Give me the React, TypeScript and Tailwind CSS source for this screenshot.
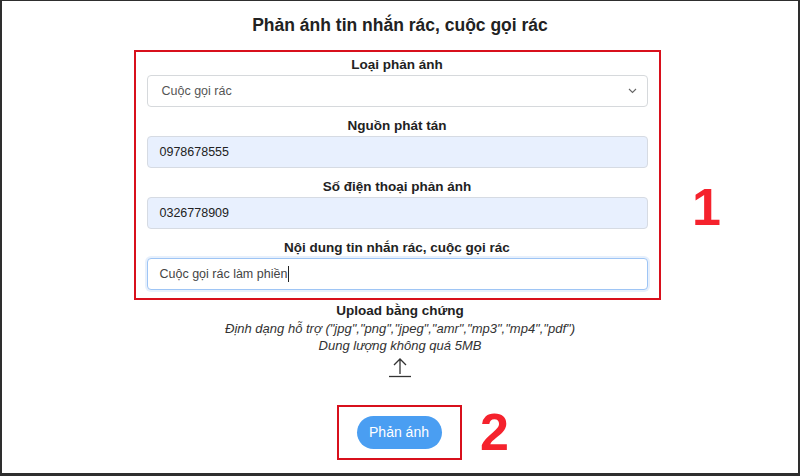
import React from "react";

const fields = [
  { label: "Nguồn phát tán", value: "0978678555" },
  { label: "Số điện thoại phản ánh", value: "0326778909" },
];

export default function App() {
  return (
    <div className="relative h-[476px] w-[800px] overflow-hidden border-t border-l-2 border-r-2 border-b-[3px] border-[#2e2e2e] bg-white font-['Liberation_Sans',Arial,sans-serif] text-[#222]">
      <div className="flex flex-col items-center">
        <h1 className="mt-[13px] text-[17.5px] font-bold leading-[22px] text-[#222]">
          Phản ánh tin nhắn rác, cuộc gọi rác
        </h1>

        {/* Annotated form block */}
        <div className="mt-[14px] ml-[-6px] flex w-[527px] flex-col border-2 border-[#d8101c] px-[11px] pb-[8px] pt-[4px]">
          <label className="mb-[1px] text-center text-[13.5px] font-bold leading-[18px]">
            Loại phản ánh
          </label>
          <div className="flex h-[32px] items-center justify-between rounded-[4px] border border-[#d6d9dc] bg-white pl-[14px] pr-[10px] text-[12.5px] text-[#555]">
            <span>Cuộc gọi rác</span>
            <svg width="9" height="6" viewBox="0 0 9 6" fill="none">
              <path d="M1 1l3.5 3.5L8 1" stroke="#666" strokeWidth="1.1" />
            </svg>
          </div>

          {fields.map((f) => (
            <React.Fragment key={f.label}>
              <label className="mb-[1px] mt-[10px] text-center text-[13.5px] font-bold leading-[18px]">
                {f.label}
              </label>
              <div className="flex h-[32px] items-center rounded-[4px] border border-[#d6dbe3] bg-[#e8f0fe] pl-[12px] text-[12.5px] text-[#222]">
                {f.value}
              </div>
            </React.Fragment>
          ))}

          <label className="mb-[1px] mt-[10px] text-center text-[13.5px] font-bold leading-[18px]">
            Nội dung tin nhắn rác, cuộc gọi rác
          </label>
          <div className="flex h-[32px] items-center rounded-[4px] border border-[#9ec5f5] bg-white pl-[12px] text-[12.5px] text-[#444] shadow-[0_0_0_2px_rgba(120,170,240,0.18)]">
            Cuộc gọi rác làm phiền
            <span className="ml-[1px] h-[16px] w-px bg-[#222]" />
          </div>
        </div>

        {/* Upload */}
        <div className="mt-[2px] flex flex-col items-center">
          <div className="text-[13.5px] font-bold leading-[18px]">Upload bằng chứng</div>
          <div className="text-[13px] italic leading-[17px] text-[#333]">
            Định dạng hỗ trợ ("jpg","png","jpeg","amr","mp3","mp4","pdf")
          </div>
          <div className="text-[13px] italic leading-[17px] text-[#333]">
            Dung lượng không quá 5MB
          </div>
          <svg className="mt-[2px]" width="24" height="22" viewBox="0 0 24 22" fill="none">
            <path d="M12 3v15M6 9l6-6 6 6" stroke="#333" strokeWidth="1.3" />
            <path d="M1 20.5h22" stroke="#333" strokeWidth="1.3" />
          </svg>
        </div>

        {/* Submit */}
        <div className="mt-[27px] ml-[-2px] flex h-[55px] w-[125px] items-center justify-center border-2 border-[#d8101c]">
          <button className="h-[33px] w-[85px] rounded-full bg-[#4a9ef2] text-[14px] text-white">
            Phản ánh
          </button>
        </div>
      </div>

      <span className="absolute left-[690px] top-[180px] text-[52px] font-bold leading-none text-[#f5222d]">
        1
      </span>
      <span className="absolute left-[478px] top-[405px] text-[52px] font-bold leading-none text-[#f5222d]">
        2
      </span>
    </div>
  );
}
